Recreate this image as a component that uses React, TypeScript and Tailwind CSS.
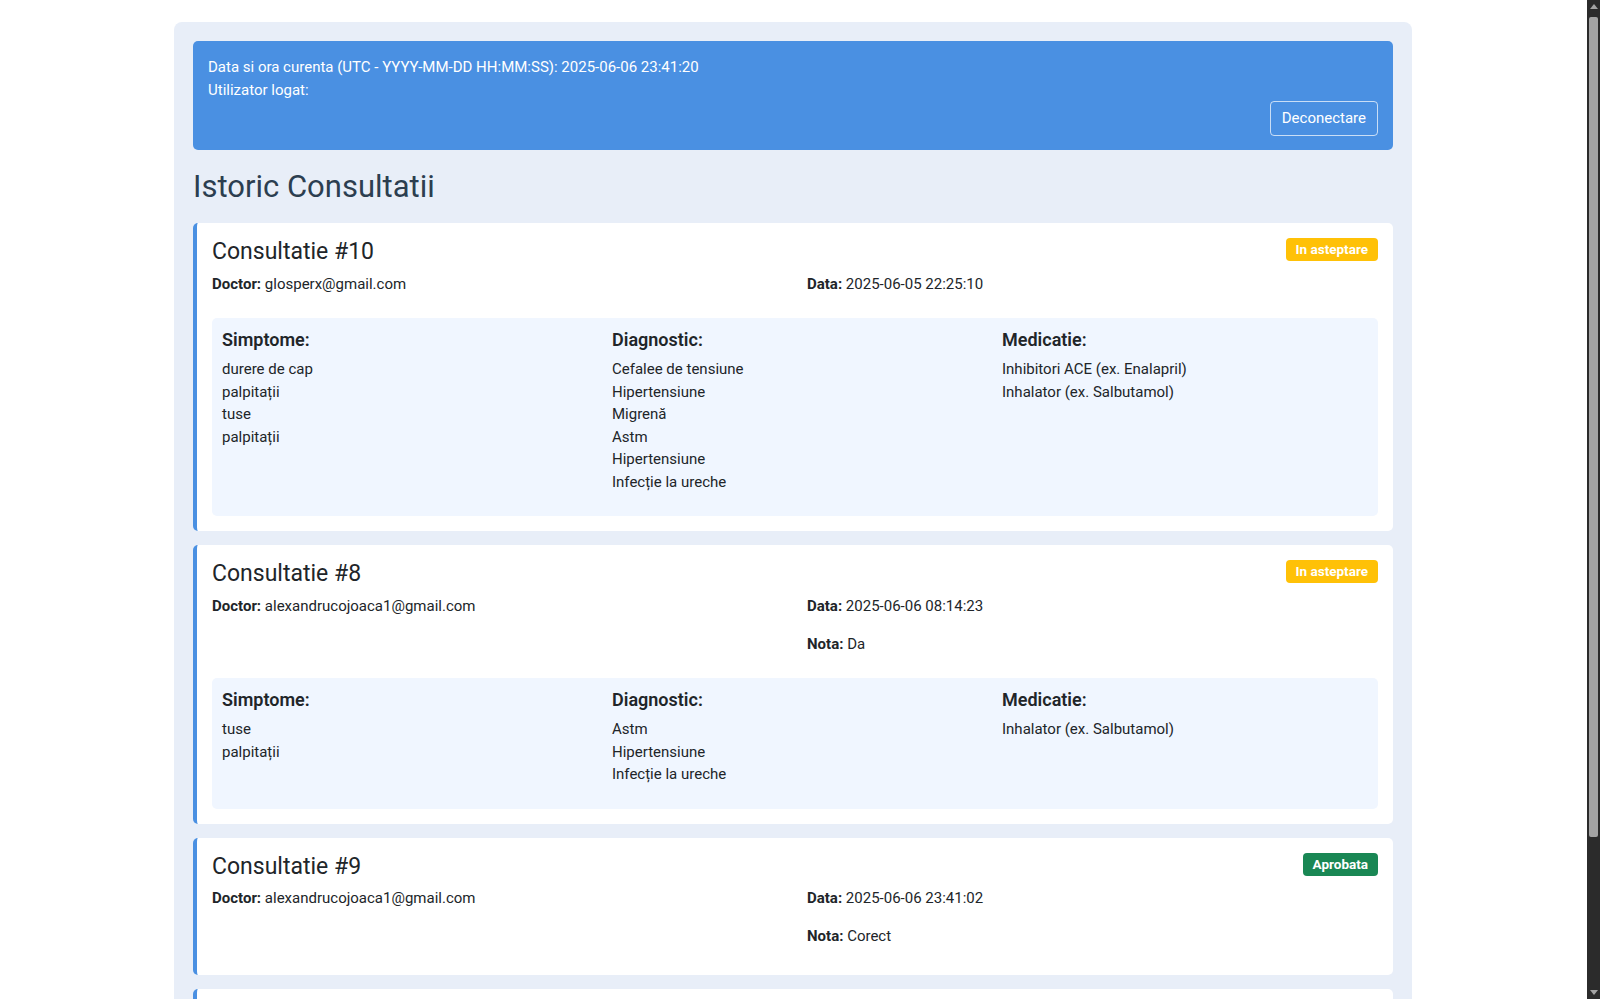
import React from 'react';

type Consult = {
  id: number;
  doctor: string;
  date: string;
  nota?: string;
  status: 'pending' | 'approved';
  simptome?: string[];
  diagnostic?: string[];
  medicatie?: string[];
};

const consultatii: Consult[] = [
  {
    id: 10,
    doctor: 'glosperx@gmail.com',
    date: '2025-06-05 22:25:10',
    status: 'pending',
    simptome: ['durere de cap', 'palpitații', 'tuse', 'palpitații'],
    diagnostic: ['Cefalee de tensiune', 'Hipertensiune', 'Migrenă', 'Astm', 'Hipertensiune', 'Infecție la ureche'],
    medicatie: ['Inhibitori ACE (ex. Enalapril)', 'Inhalator (ex. Salbutamol)'],
  },
  {
    id: 8,
    doctor: 'alexandrucojoaca1@gmail.com',
    date: '2025-06-06 08:14:23',
    nota: 'Da',
    status: 'pending',
    simptome: ['tuse', 'palpitații'],
    diagnostic: ['Astm', 'Hipertensiune', 'Infecție la ureche'],
    medicatie: ['Inhalator (ex. Salbutamol)'],
  },
  {
    id: 9,
    doctor: 'alexandrucojoaca1@gmail.com',
    date: '2025-06-06 23:41:02',
    nota: 'Corect',
    status: 'approved',
  },
  {
    id: 7,
    doctor: 'glosperx@gmail.com',
    date: '2025-06-04 18:02:47',
    status: 'approved',
  },
];

function Badge({ status }: { status: Consult['status'] }) {
  if (status === 'approved') {
    return (
      <span className="inline-flex h-[23px] items-center rounded-[4px] bg-[#198754] px-[10px] text-[13.5px] font-bold text-white">
        Aprobata
      </span>
    );
  }
  return (
    <span className="inline-flex h-[23px] items-center rounded-[4px] bg-[#ffc107] px-[10px] text-[13.5px] font-bold text-white">
      In asteptare
    </span>
  );
}

function ListCol({ title, items }: { title: string; items: string[] }) {
  return (
    <div>
      <h5 className="mb-[6px] text-[18px] font-semibold leading-[24px]">{title}</h5>
      <ul className="mb-[13px]">
        {items.map((it, i) => (
          <li key={i}>{it}</li>
        ))}
      </ul>
    </div>
  );
}

function ConsultCard({ c }: { c: Consult }) {
  const hasBox = !!c.simptome;
  return (
    <div className="mb-[14px] rounded-[5px] border-l-4 border-[#4a90e2] bg-white p-[15px]">
      <div className="flex items-start justify-between">
        <h4 className="mb-[6px] text-[23px] font-normal leading-[28.8px]">Consultatie #{c.id}</h4>
        <Badge status={c.status} />
      </div>
      <div className="grid grid-cols-2 gap-x-6">
        <div>
          <p className={hasBox ? 'mb-[15px]' : 'mb-[13px]'}>
            <strong>Doctor:</strong> {c.doctor}
          </p>
        </div>
        <div>
          <p className={c.nota || hasBox ? 'mb-[15px]' : 'mb-[13px]'}>
            <strong>Data:</strong> {c.date}
          </p>
          {c.nota && (
            <p className={hasBox ? 'mb-[15px]' : 'mb-[13px]'}>
              <strong>Nota:</strong> {c.nota}
            </p>
          )}
        </div>
      </div>
      {hasBox && (
        <div className="mt-[8px] grid grid-cols-3 gap-x-6 rounded-[5px] bg-[#f0f6ff] p-[10px]">
          <ListCol title="Simptome:" items={c.simptome ?? []} />
          <ListCol title="Diagnostic:" items={c.diagnostic ?? []} />
          <ListCol title="Medicatie:" items={c.medicatie ?? []} />
        </div>
      )}
    </div>
  );
}

export default function App() {
  return (
    <div
      className="min-h-screen bg-white pr-[14px] text-[15px] leading-[22.5px] text-[#212529]"
      style={{ fontFamily: '"Segoe UI", Roboto, "Noto Sans", sans-serif' }}
    >
      <div className="mx-auto mt-[22px] w-[1238px] rounded-lg bg-[#e8eef8] p-[19px]">
        <div className="mb-[18px] rounded-[5px] bg-[#4a90e2] px-[15px] pt-[15px] pb-[14px] text-white">
          <div>Data si ora curenta (UTC - YYYY-MM-DD HH:MM:SS): 2025-06-06 23:41:20</div>
          <div>Utilizator logat:</div>
          <div className="text-right">
            <button className="rounded-[4px] border border-white/70 px-[11px] py-[5px] text-white">
              Deconectare
            </button>
          </div>
        </div>

        <h2 className="mb-[17px] text-[31px] font-normal leading-[38.4px] text-[#2c3e50]">Istoric Consultatii</h2>

        {consultatii.map((c) => (
          <ConsultCard key={c.id} c={c} />
        ))}
      </div>

      {/* scrollbar from the screenshot */}
      <div className="fixed right-0 top-0 flex h-screen w-[13px] flex-col items-center bg-[#2b2b2b]">
        <div className="mt-[4px] h-0 w-0 border-x-[4px] border-b-[5px] border-x-transparent border-b-[#a3a3a3]" />
        <div className="mt-[8px] h-[820px] w-[9px] rounded-[2px] bg-[#a3a3a3]" />
        <div className="mt-auto mb-[4px] h-0 w-0 border-x-[4px] border-t-[5px] border-x-transparent border-t-[#a3a3a3]" />
      </div>
    </div>
  );
}
